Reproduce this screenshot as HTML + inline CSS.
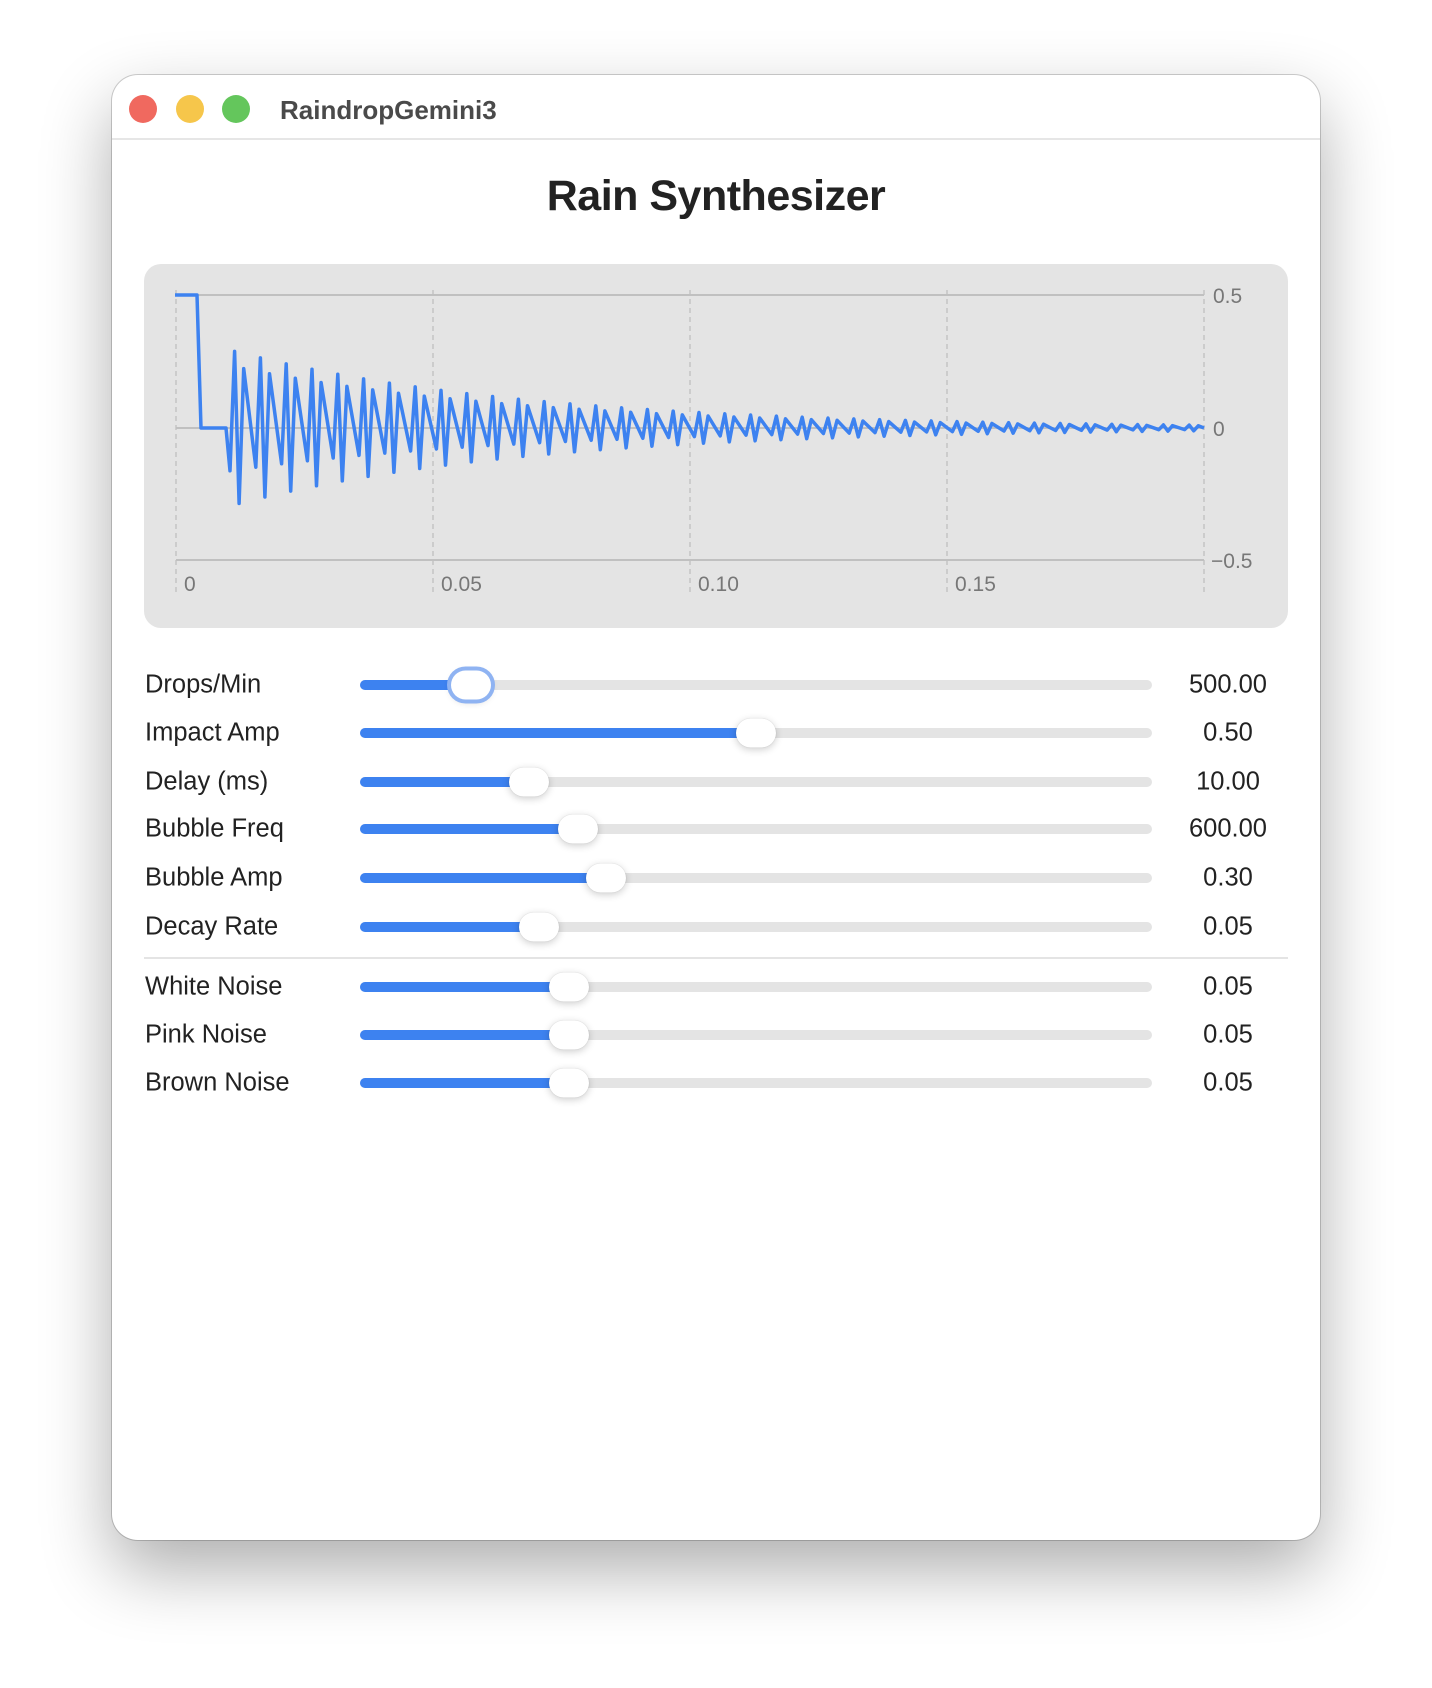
<!DOCTYPE html>
<html><head><meta charset="utf-8"><style>
html,body{margin:0;padding:0;background:#fff;width:1432px;height:1688px;overflow:hidden;font-family:"Liberation Sans",sans-serif}
.win{position:absolute;left:112px;top:75px;width:1208px;height:1465px;border-radius:26px;background:#fff;box-shadow:0 30px 70px rgba(0,0,0,.32),0 0 0 1px rgba(0,0,0,.18);overflow:hidden}
.tb{position:absolute;left:0;top:0;width:100%;height:63px;border-bottom:2px solid #e6e6e6}
.dot{position:absolute;top:20px;width:28px;height:28px;border-radius:50%}
.title{position:absolute;left:168px;top:20px;font-size:26px;font-weight:bold;color:#4a4a4a}
h1{position:absolute;left:0;width:100%;top:172px;margin:0;text-align:center;font-size:43px;font-weight:bold;color:#222;letter-spacing:-0.5px}
.chart{position:absolute;left:144px;top:264px;width:1144px;height:364px;background:#e4e4e4;border-radius:17px}
.lab{position:absolute;left:145px;font-size:25.5px;color:#222;transform:translateY(-50%)}
.val{position:absolute;left:1168px;width:120px;text-align:center;font-size:25.5px;color:#222;transform:translateY(-50%)}
.tr{position:absolute;left:360px;width:792px;height:10px;border-radius:5px;background:#e4e4e4;transform:translateY(-50%)}
.fill{position:absolute;left:360px;height:10px;border-radius:5px;background:#3d82f0;transform:translateY(-50%)}
.knob{position:absolute;width:40px;height:29px;border-radius:15px;background:#fff;box-shadow:0 2px 8px rgba(0,0,0,.2),0 0 1px rgba(0,0,0,.2);transform:translate(-50%,-50%)}
</style></head><body>
<div class="win"></div>
<div style="position:absolute;left:112px;top:75px;width:1208px;height:1465px">
<div class="tb"></div>
<div class="dot" style="left:17px;background:#f0695f"></div>
<div class="dot" style="left:64px;background:#f6c64b"></div>
<div class="dot" style="left:110px;background:#64c65c"></div>
<div class="title">RaindropGemini3</div>
</div>
<h1>Rain Synthesizer</h1>
<div class="chart"></div>
<svg style="position:absolute;left:0;top:0" width="1432" height="1688">
<g stroke="#c4c4c4" stroke-width="1.5" stroke-dasharray="5,4">
<line x1="176" y1="290" x2="176" y2="592"/><line x1="433" y1="290" x2="433" y2="592"/><line x1="690" y1="290" x2="690" y2="592"/><line x1="947" y1="290" x2="947" y2="592"/><line x1="1204" y1="290" x2="1204" y2="592"/>
</g>
<g stroke="#c0c0c0" stroke-width="2">
<line x1="176" y1="295" x2="1204" y2="295"/><line x1="176" y1="428" x2="1204" y2="428"/><line x1="176" y1="560" x2="1204" y2="560"/>
</g>
<g font-family="Liberation Sans" font-size="21" fill="#777">
<text x="1213" y="303">0.5</text><text x="1213" y="436">0</text><text x="1211" y="568">−0.5</text>
<text x="184" y="591">0</text><text x="441" y="591">0.05</text><text x="698" y="591">0.10</text><text x="955" y="591">0.15</text>
</g>
<polyline id="wave" fill="none" stroke="#3d82f0" stroke-width="3.5" stroke-linejoin="round" points=""/>
</svg>
<script>
(function(){
var pts=[[175,295],[197,295],[201,428],[226,428]];
var P=25.8,x0=230,y0=428,s=266;
var offs=[[0,-0.55],[4.6,1],[9.1,-1],[13.7,0.8]];
for(var k=0;k<60;k++){for(var j=0;j<4;j++){var x=x0+k*P+offs[j][0];if(x>1202)break;var t=(x-176)/5140;var a=0.29*Math.exp(-17.7*(t-0.011));pts.push([x,y0-offs[j][1]*a*s]);}}
pts.push([1204,428]);
document.getElementById('wave').setAttribute('points',pts.map(function(p){return p[0].toFixed(1)+','+p[1].toFixed(1)}).join(' '));
})();
</script>
<div style="position:absolute;left:144px;top:957px;width:1144px;height:2px;background:#e4e4e4"></div>

<div class="lab" style="top:685px">Drops/Min</div><div class="tr" style="top:685px"></div><div class="fill" style="top:685px;width:111px"></div><div class="knob" style="left:471px;top:685px;box-shadow:0 0 0 4px #8fb3f2,0 2px 8px rgba(0,0,0,.2)"></div><div class="val" style="top:685px">500.00</div>
<div class="lab" style="top:733px">Impact Amp</div><div class="tr" style="top:733px"></div><div class="fill" style="top:733px;width:396px"></div><div class="knob" style="left:756px;top:733px"></div><div class="val" style="top:733px">0.50</div>
<div class="lab" style="top:782px">Delay (ms)</div><div class="tr" style="top:782px"></div><div class="fill" style="top:782px;width:169px"></div><div class="knob" style="left:529px;top:782px"></div><div class="val" style="top:782px">10.00</div>
<div class="lab" style="top:829px">Bubble Freq</div><div class="tr" style="top:829px"></div><div class="fill" style="top:829px;width:218px"></div><div class="knob" style="left:578px;top:829px"></div><div class="val" style="top:829px">600.00</div>
<div class="lab" style="top:878px">Bubble Amp</div><div class="tr" style="top:878px"></div><div class="fill" style="top:878px;width:246px"></div><div class="knob" style="left:606px;top:878px"></div><div class="val" style="top:878px">0.30</div>
<div class="lab" style="top:927px">Decay Rate</div><div class="tr" style="top:927px"></div><div class="fill" style="top:927px;width:179px"></div><div class="knob" style="left:539px;top:927px"></div><div class="val" style="top:927px">0.05</div>
<div class="lab" style="top:987px">White Noise</div><div class="tr" style="top:987px"></div><div class="fill" style="top:987px;width:209px"></div><div class="knob" style="left:569px;top:987px"></div><div class="val" style="top:987px">0.05</div>
<div class="lab" style="top:1035px">Pink Noise</div><div class="tr" style="top:1035px"></div><div class="fill" style="top:1035px;width:209px"></div><div class="knob" style="left:569px;top:1035px"></div><div class="val" style="top:1035px">0.05</div>
<div class="lab" style="top:1083px">Brown Noise</div><div class="tr" style="top:1083px"></div><div class="fill" style="top:1083px;width:209px"></div><div class="knob" style="left:569px;top:1083px"></div><div class="val" style="top:1083px">0.05</div>
</body></html>
